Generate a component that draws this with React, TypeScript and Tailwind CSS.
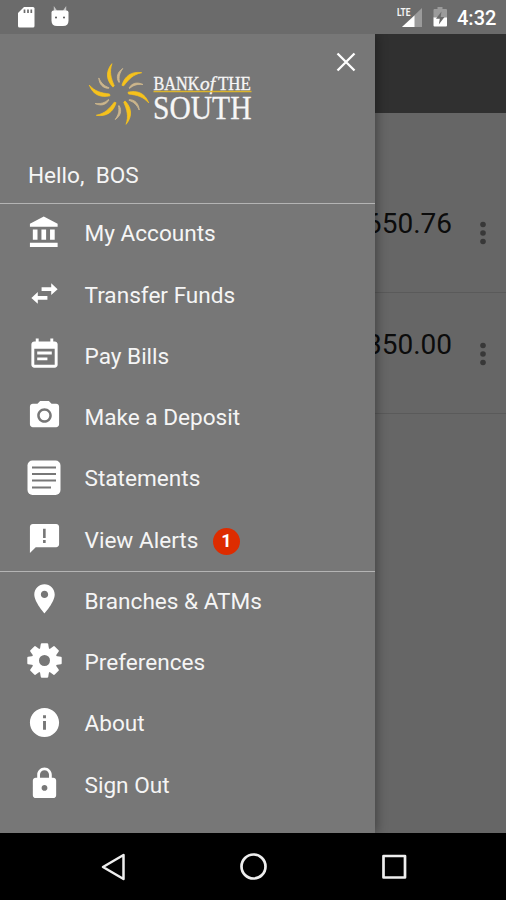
import React from 'react';

interface MenuItem {
  label: string;
  icon: React.ReactNode;
  badge?: number;
}

const Glyph: React.FC<{ d: string }> = ({ d }) => (
  <svg viewBox="0 0 24 24" className="h-[35px] w-[35px] shrink-0" fill="#fff" fillRule="evenodd">
    <path d={d} />
  </svg>
);

const StatementIcon = () => (
  <svg viewBox="0 0 35 35" className="h-[35px] w-[35px] shrink-0">
    <rect x="0.5" y="0.5" width="33" height="34.5" rx="5" fill="#fff" />
    <path d="M5 7.500h24M5 14h24M5 20.500h24M5 27.500h19" stroke="#777" strokeWidth="2" />
  </svg>
);

const GearIcon = () => (
  <svg viewBox="-17.500 -17.500 35 35" className="h-[35px] w-[35px] shrink-0">
    {[0, 45, 90, 135].map((angle) => (
      <path
        key={angle}
        d="M-4.600 -11L-3.700 -16.400Q-3.500 -17.200 -2.700 -17.200H2.700Q3.500 -17.200 3.700 -16.400L4.600 -11V11L3.700 16.400Q3.500 17.200 2.700 17.200H-2.700Q-3.500 17.200 -3.700 16.400L-4.600 11Z"
        fill="#fff"
        transform={`rotate(${angle})`}
      />
    ))}
    <circle r="12.800" fill="#fff" />
    <circle r="5.500" fill="#777" />
  </svg>
);

const accountItems: MenuItem[] = [
  {
    label: 'My Accounts',
    icon: <Glyph d="M4 10v7h3.200v-7H4zm5.900 0v7h3.200v-7H9.900zM2 22h19v-3H2v3zm13.800-12v7H19v-7h-3.200zm-4.300-9L2 6v2h19V6l-9.500-5z" />,
  },
  {
    label: 'Transfer Funds',
    icon: <Glyph d="M7.400 11L3 15l4.400 4v-2.700H14v-2.600H7.400V11zM21 9l-4.400-4v2.700H10v2.600h6.600V13L21 9z" />,
  },
  {
    label: 'Pay Bills',
    icon: (
      <Glyph d="M17 10H7v2h10v-2zm2-7h-1V1h-2v2H8V1H6v2H5c-1.110 0-1.990.9-1.990 2L3 19c0 1.100.890 2 2 2h14c1.100 0 2-.9 2-2V5c0-1.100-.9-2-2-2zm0 16H5V8h14v11zm-5-5H7v2h7v-2z" />
    ),
  },
  {
    label: 'Make a Deposit',
    icon: (
      <Glyph d="M9 2L7.170 4H4c-1.100 0-2 .9-2 2v12c0 1.100.9 2 2 2h16c1.100 0 2-.9 2-2V6c0-1.100-.9-2-2-2h-3.170L15 2H9zm3 15c-2.760 0-5-2.240-5-5s2.240-5 5-5 5 2.240 5 5-2.240 5-5 5zm0-1.700a3.300 3.300 0 1 0 0-6.600 3.300 3.300 0 0 0 0 6.600z" />
    ),
  },
  { label: 'Statements', icon: <StatementIcon /> },
  {
    label: 'View Alerts',
    badge: 1,
    icon: (
      <Glyph d="M20 2H4c-1.100 0-1.990.9-1.990 2L2 22l4-4h14c1.100 0 2-.9 2-2V4c0-1.100-.9-2-2-2zm-7.200 13h-1.800v-1.900h1.800v1.900zm0-3.400h-1.800V5.300h1.800v6.300z" />
    ),
  },
];

const generalItems: MenuItem[] = [
  {
    label: 'Branches & ATMs',
    icon: (
      <Glyph d="M12 1.500C8.130 1.500 5 4.630 5 8.500c0 5.250 7 13 7 13s7-7.750 7-13c0-3.870-3.130-7-7-7zm0 9.500c-1.380 0-2.500-1.120-2.500-2.500s1.120-2.500 2.500-2.500 2.500 1.120 2.500 2.500-1.120 2.500-2.500 2.500z" />
    ),
  },
  { label: 'Preferences', icon: <GearIcon /> },
  {
    label: 'About',
    icon: (
      <Glyph d="M12 2C6.480 2 2 6.480 2 12s4.480 10 10 10 10-4.480 10-10S17.520 2 12 2zm1 15h-2v-6h2v6zm0-8h-2V7h2v2z" />
    ),
  },
  {
    label: 'Sign Out',
    icon: (
      <Glyph d="M18 8h-1V6c0-2.760-2.240-5-5-5S7 3.240 7 6v2H6c-1.100 0-2 .9-2 2v10c0 1.100.9 2 2 2h12c1.100 0 2-.9 2-2V10c0-1.100-.9-2-2-2zm-6 9c-1.100 0-2-.9-2-2s.9-2 2-2 2 .9 2 2-.9 2-2 2zm3.100-9H8.900V6c0-1.710 1.390-3.100 3.100-3.100s3.100 1.390 3.100 3.100v2z" />
    ),
  },
];

const Logo = () => (
  <svg viewBox="0 0 166 70" className="h-[70px] w-[166px]">
    {[0, 60, 120, 180, 240, 300].map((angle) => (
      <g key={angle} transform={`translate(31 32) rotate(${angle})`}>
        <path d="M9 -1.800C18 -4 26 -1 29.800 9C24 2.500 18 1 9.500 0Z" fill="#f6c21c" stroke="#f6c21c" strokeWidth="0.700" strokeLinejoin="round" />
        <path d="M10 -6C13 -11 18 -12.300 24 -9.500C18 -10 14.500 -9 10.500 -5.500Z" fill="#cdb68c" stroke="#cdb68c" strokeWidth="0.800" strokeLinejoin="round" />
      </g>
    ))}
    <g fill="#f6f6f6" stroke="#f6f6f6" strokeWidth="0.300" fontFamily="'Liberation Serif', serif">
      <text x="65.500" y="27.800" fontSize="18" textLength="46" lengthAdjust="spacingAndGlyphs">BANK</text>
      <text x="112" y="27.800" fontSize="19" fontStyle="italic" textLength="15" lengthAdjust="spacingAndGlyphs">of</text>
      <text x="130" y="27.800" fontSize="18" textLength="33" lengthAdjust="spacingAndGlyphs">THE</text>
      <text x="65" y="56.500" fontSize="33.500" textLength="98.500" lengthAdjust="spacingAndGlyphs">SOUTH</text>
    </g>
    <path d="M65.500 29.500H163.500" stroke="#dcb52c" strokeWidth="1.600" />
  </svg>
);

const StatusBar = () => (
  <div className="flex h-[34px] shrink-0 items-center bg-[#6b6b6b] pl-[18px] pr-[10px]">
    <svg viewBox="0 0 17 21" className="h-[21px] w-[17px]">
      <path d="M6 0h9q1.500 0 1.500 1.500v17.500q0 1.500-1.500 1.500h-13.500q-1.500 0-1.500-1.500V6z" fill="#fff" />
      <path d="M6.500 2.500v3.500M10 2.500v3.500M13.300 2.500v3.500" stroke="#6b6b6b" strokeWidth="1.700" />
    </svg>
    <svg viewBox="0 0 18 21" className="-mt-0.5 ml-4 h-[21px] w-[18px]">
      <path d="M2.800 0L6 4.500h6L15.200 0V7H2.800z" fill="#c5c5c5" />
      <path d="M.5 6.500q0-2 2-2h13q2 0 2 2v8q0 5.500-5.500 5.500H6q-5.500 0-5.500-5.500z" fill="#fff" />
      <circle cx="5" cy="11.500" r="1" fill="#555" />
      <circle cx="13" cy="11.500" r="1" fill="#555" />
    </svg>
    <div className="ml-auto flex items-center">
      <svg viewBox="0 0 26 22" className="h-[22px] w-[26px]">
        <path d="M25 2v19H5z" fill="#9b9b9b" />
        <path d="M17.500 9.500V21H5z" fill="#fff" />
        <text x="0" y="10" fontSize="11.500" fontWeight="700" fontFamily="Roboto, sans-serif" fill="#f4f4f4" textLength="13.500" lengthAdjust="spacingAndGlyphs">LTE</text>
      </svg>
      <svg viewBox="0 0 15 20" className="ml-[10px] h-[20px] w-[15px]">
        <path d="M4.500 0h5v2H13q1 0 1 1v8H.5V3q0-1 1-1h3z" fill="#9b9b9b" />
        <path d="M.5 10.500H14V18.500q0 1-1 1H1.500q-1 0-1-1z" fill="#fff" />
        <path d="M8.500 4.500L3 11.800h3.800L5.800 17.500 11.500 10H7.700z" fill="#6b6b6b" />
      </svg>
      <span className="ml-[9px] mt-[2px] w-[39px] whitespace-nowrap text-[20px] font-medium leading-none text-white">4:32</span>
    </div>
  </div>
);

const MenuRow: React.FC<MenuItem> = ({ label, icon, badge }) => (
  <li className="flex h-[61.250px] items-center pl-[26.500px]">
    <div className="pb-[5px]">{icon}</div>
    <span className="ml-[23px] text-[22.600px] leading-none text-[#f5f5f5]">{label}</span>
    {badge && (
      <span className="ml-[14.500px] mt-px flex h-[27px] w-[27px] items-center justify-center rounded-full bg-[#dd2c00] text-[18px] font-bold leading-none text-white">
        {badge}
      </span>
    )}
  </li>
);

const Drawer = () => (
  <aside className="absolute inset-y-0 left-0 flex w-[375px] flex-col bg-[#777777] shadow-[2px_0_10px_rgba(0,0,0,0.35)]">
    <div className="flex h-[170px] shrink-0 flex-col border-b border-[#b4b4b4]">
      <div className="flex items-start justify-between pl-[88px] pr-[19px]">
        <div className="pt-[28px]">
          <Logo />
        </div>
        <svg viewBox="0 0 20 20" className="mt-[18px] h-5 w-5" stroke="#fff" strokeWidth="2.300">
          <path d="M1.500 1.500l17 17M18.500 1.500l-17 17" />
        </svg>
      </div>
      <p className="mt-auto whitespace-pre pb-[16px] pl-[28px] text-[22.600px] leading-[23px] text-[#f5f5f5]">
        {'Hello,  BOS'}
      </p>
    </div>
    <ul className="h-[367.500px] border-b border-[#b4b4b4]">
      {accountItems.map((item) => (
        <MenuRow key={item.label} {...item} />
      ))}
    </ul>
    <ul>
      {generalItems.map((item) => (
        <MenuRow key={item.label} {...item} />
      ))}
    </ul>
  </aside>
);

const AccountRow: React.FC<{ amount: string }> = ({ amount }) => (
  <div className="flex h-[121px] items-start justify-end border-b border-[#5a5a5a] pr-5 pt-[38px]">
    <span className="text-[28px] leading-[28px] text-[#0c0c0c]">{amount}</span>
    <svg viewBox="0 0 6 24" className="ml-[28px] mt-[11px] h-6 w-[6px]" fill="#383838">
      <circle cx="3" cy="3.500" r="2.800" />
      <circle cx="3" cy="12" r="2.800" />
      <circle cx="3" cy="20.500" r="2.800" />
    </svg>
  </div>
);

const NavBar = () => (
  <div className="flex h-[67px] shrink-0 items-center justify-between bg-black pl-[101px] pr-[99px]">
    <svg viewBox="0 0 26 28" className="h-7 w-[26px]" fill="none" stroke="#eee" strokeWidth="2.500" strokeLinejoin="round">
      <path d="M22.500 2v24L2 14z" />
    </svg>
    <svg viewBox="0 0 28 28" className="h-7 w-7" fill="none" stroke="#eee" strokeWidth="2.700">
      <circle cx="13.500" cy="13.500" r="12" />
    </svg>
    <svg viewBox="0 0 26 26" className="h-[26px] w-[26px]" fill="none" stroke="#eee" strokeWidth="2.700" strokeLinejoin="round">
      <rect x="2.500" y="2" width="21.500" height="21.500" />
    </svg>
  </div>
);

const App: React.FC = () => {
  return (
    <div className="flex h-[900px] w-[506px] flex-col overflow-hidden font-['Roboto',sans-serif]">
      <StatusBar />
      <main className="relative flex-1 overflow-hidden bg-[#666666]">
        <div className="h-[79px] bg-[#303030]" />
        <div className="pt-[59px]">
          <AccountRow amount="650.76" />
          <AccountRow amount="350.00" />
        </div>
        <Drawer />
      </main>
      <NavBar />
    </div>
  );
};

export default App;
